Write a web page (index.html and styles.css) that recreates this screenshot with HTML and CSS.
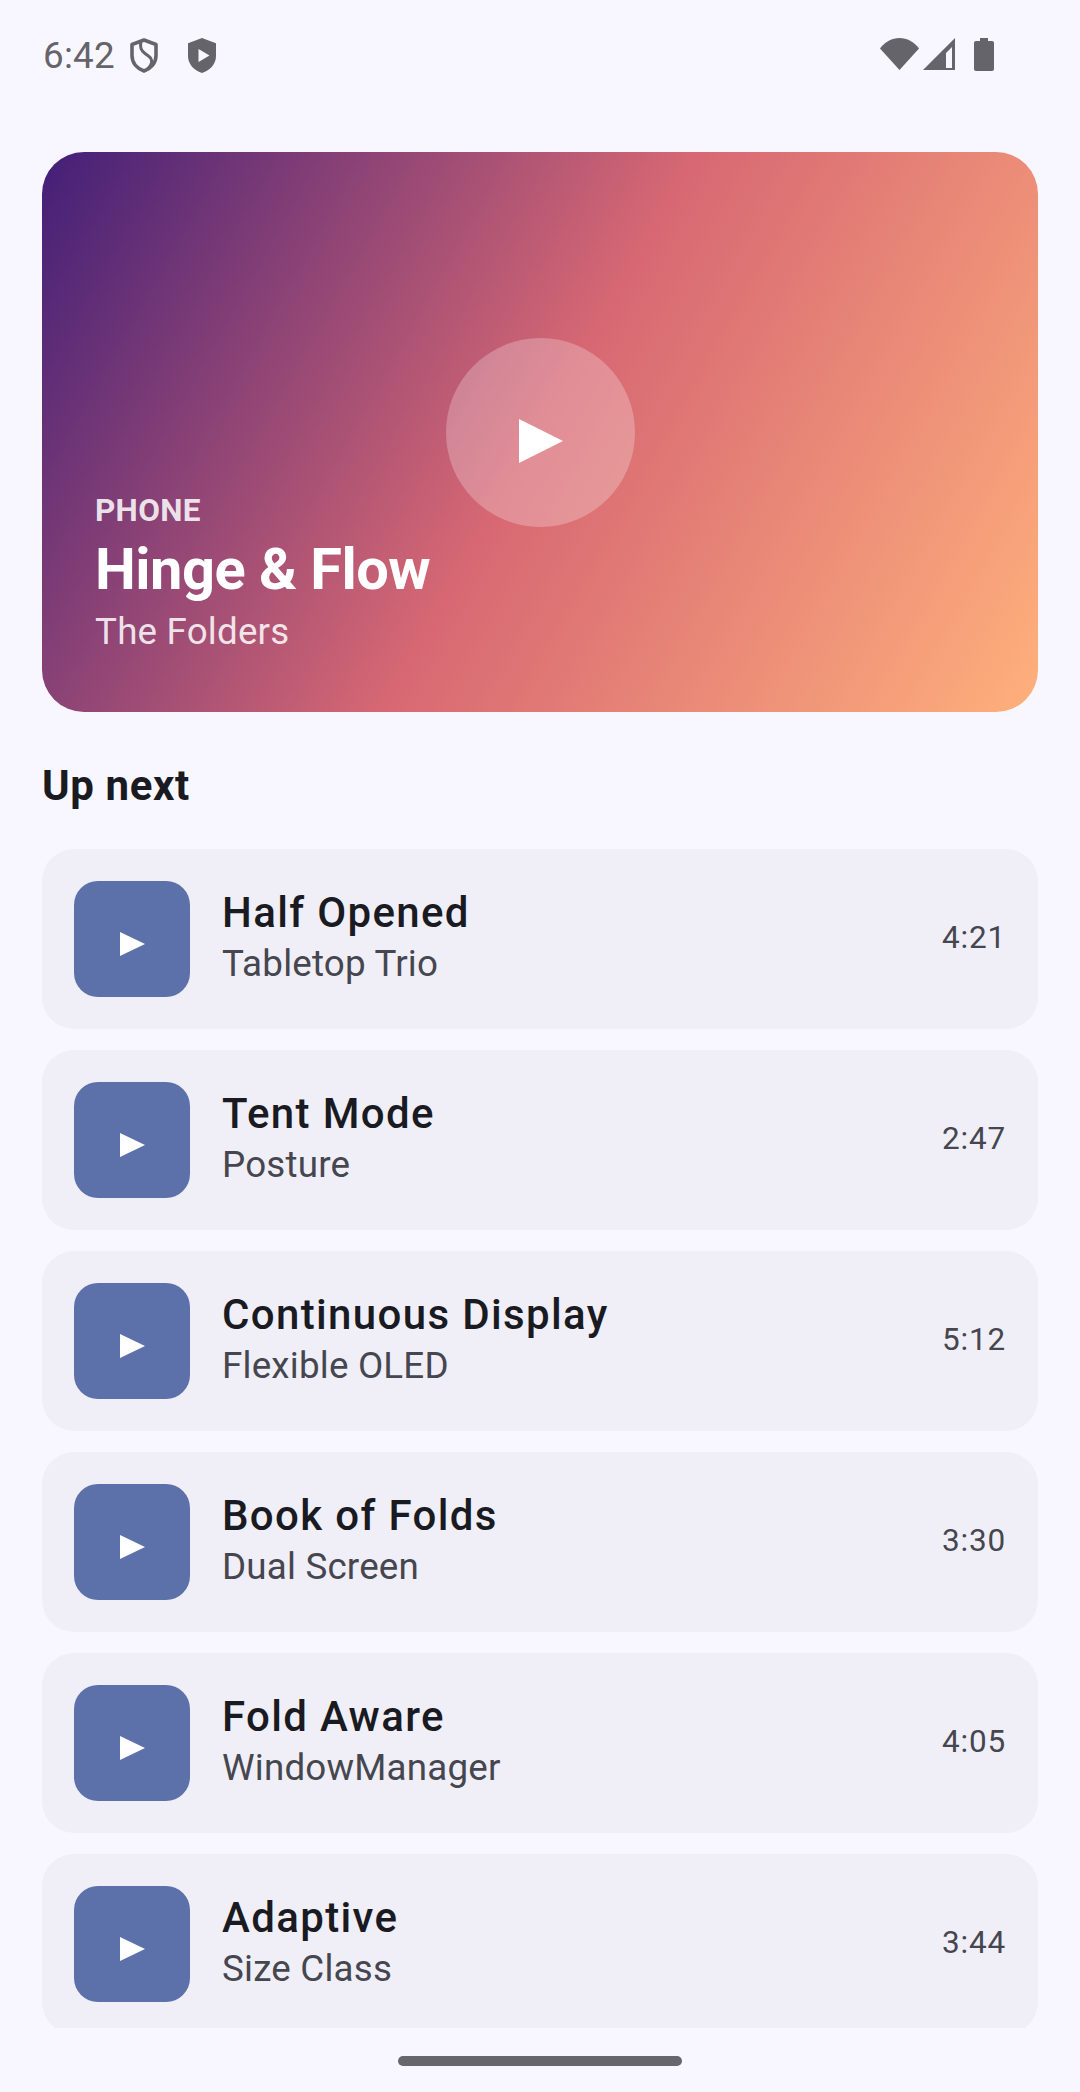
FILE: index.html
```html
<!DOCTYPE html>
<html lang="en">

<head>
    <meta charset="UTF-8">
    <meta name="viewport" content="width=device-width, initial-scale=1.0">
    <title>Up next</title>
    <link rel="stylesheet" href="styles.css">
</head>

<body>
    <div class="status-bar">
        <div class="status-left">
            <span class="clock">6:42</span>
            <svg class="shield" viewBox="0 0 28 35">
                <path d="M14 2 26 6.500V17.500C26 25 21 30.500 14 33 7 30.500 2 25 2 17.500V6.500Z" fill="none" stroke="#64646a" stroke-width="3.600" stroke-linejoin="round" />
                <path d="M11 4C9.500 9 11 12.500 15 15.500 19 18.500 22.500 20 21.500 25 21 27.500 19.500 29 17.500 31" fill="none" stroke="#64646a" stroke-width="3" />
            </svg>
            <svg class="shield shield-play" viewBox="0 0 28 35">
                <path fill-rule="evenodd" fill="#64646a" d="M14 0 28 5.200V18c0 8-5.600 14-14 17C5.600 32 0 26 0 18V5.200ZM10.500 11v13l11-6.500Z" />
            </svg>
        </div>
        <div class="status-right">
            <svg class="wifi" viewBox="0 0 39 32">
                <path fill="#64646a" d="M0 10.500C5 3.800 12 0 19.500 0S34 3.800 39 10.500L19.500 32Z" />
            </svg>
            <svg class="signal" viewBox="0 0 32 32">
                <path fill-rule="evenodd" fill="#64646a" d="M32 0V32H0ZM29 9 23 15V30H29Z" />
            </svg>
            <svg class="battery" viewBox="0 0 20 33">
                <path fill="#64646a" d="M6 0H14V3H18C19.200 3 20 3.800 20 5V31C20 32.200 19.200 33 18 33H2C.8 33 0 32.200 0 31V5C0 3.800.8 3 2 3H6Z" />
            </svg>
        </div>
    </div>

    <div class="content">
        <div class="hero">
            <div class="hero-play">
                <svg class="hero-arrow" viewBox="0 0 44 44">
                    <path fill="#fff" d="M0 0 44 22 0 44Z" />
                </svg>
            </div>
            <div class="hero-tag">PHONE</div>
            <div class="hero-title">Hinge &amp; Flow</div>
            <div class="hero-artist">The Folders</div>
        </div>

        <h2 class="section-title">Up next</h2>

        <div class="track-list">
            <div class="track">
                <div class="thumb"><svg class="thumb-arrow" viewBox="0 0 25 24"><path fill="#fff" d="M0 0 25 12 0 24Z" /></svg></div>
                <div class="track-info">
                    <div class="track-name">Half Opened</div>
                    <div class="track-artist">Tabletop Trio</div>
                </div>
                <div class="track-time">4:21</div>
            </div>
            <div class="track">
                <div class="thumb"><svg class="thumb-arrow" viewBox="0 0 25 24"><path fill="#fff" d="M0 0 25 12 0 24Z" /></svg></div>
                <div class="track-info">
                    <div class="track-name">Tent Mode</div>
                    <div class="track-artist">Posture</div>
                </div>
                <div class="track-time">2:47</div>
            </div>
            <div class="track">
                <div class="thumb"><svg class="thumb-arrow" viewBox="0 0 25 24"><path fill="#fff" d="M0 0 25 12 0 24Z" /></svg></div>
                <div class="track-info">
                    <div class="track-name">Continuous Display</div>
                    <div class="track-artist">Flexible OLED</div>
                </div>
                <div class="track-time">5:12</div>
            </div>
            <div class="track">
                <div class="thumb"><svg class="thumb-arrow" viewBox="0 0 25 24"><path fill="#fff" d="M0 0 25 12 0 24Z" /></svg></div>
                <div class="track-info">
                    <div class="track-name">Book of Folds</div>
                    <div class="track-artist">Dual Screen</div>
                </div>
                <div class="track-time">3:30</div>
            </div>
            <div class="track">
                <div class="thumb"><svg class="thumb-arrow" viewBox="0 0 25 24"><path fill="#fff" d="M0 0 25 12 0 24Z" /></svg></div>
                <div class="track-info">
                    <div class="track-name">Fold Aware</div>
                    <div class="track-artist">WindowManager</div>
                </div>
                <div class="track-time">4:05</div>
            </div>
            <div class="track">
                <div class="thumb"><svg class="thumb-arrow" viewBox="0 0 25 24"><path fill="#fff" d="M0 0 25 12 0 24Z" /></svg></div>
                <div class="track-info">
                    <div class="track-name">Adaptive</div>
                    <div class="track-artist">Size Class</div>
                </div>
                <div class="track-time">3:44</div>
            </div>
        </div>
    </div>

    <div class="nav-bar">
        <div class="home-pill"></div>
    </div>
</body>

</html>
```

FILE: styles.css
```css
body {
    margin: 0;
    padding: 0;
    width: 1080px;
    height: 2092px;
    overflow: hidden;
    background-color: #f8f7ff;
    font-family: Roboto, sans-serif;
    display: flex;
    flex-direction: column;
}

.status-bar {
    height: 152px;
    flex-shrink: 0;
    display: flex;
    justify-content: space-between;
    align-items: flex-start;
    padding: 38px 86px 0 43px;
    box-sizing: border-box;
}

.status-left {
    display: flex;
    align-items: center;
    height: 35px;
}

.clock {
    font-size: 36.75px;
    line-height: 35px;
    letter-spacing: 0.25px;
    color: #64646a;
    width: 87px;
}

.shield {
    width: 28px;
    height: 35px;
}

.shield-play {
    margin-left: 30px;
}

.status-right {
    display: flex;
    align-items: flex-start;
}

.wifi {
    width: 39px;
    height: 32px;
}

.signal {
    width: 32px;
    height: 32px;
    margin-left: 4px;
}

.battery {
    width: 20px;
    height: 33px;
    margin-left: 19px;
}

.content {
    height: 1876px;
    flex-shrink: 0;
    overflow: hidden;
    padding: 0 42px;
    box-sizing: border-box;
}

.hero {
    position: relative;
    height: 560px;
    border-radius: 42px;
    background: linear-gradient(119.4deg, #421f78 0%, #d76873 50%, #ffb07c 100%);
    box-sizing: border-box;
    padding: 339px 53px 0;
    color: #ffffff;
}

.hero-play {
    position: absolute;
    left: 404px;
    top: 186px;
    width: 189px;
    height: 189px;
    border-radius: 50%;
    background-color: rgba(255, 255, 255, 0.25);
    display: flex;
    align-items: center;
    justify-content: center;
}

.hero-arrow {
    width: 44px;
    height: 44px;
    margin-top: 16px;
}

.hero-tag {
    font-size: 31.5px;
    font-weight: 700;
    line-height: 40px;
    letter-spacing: 0.3px;
    color: rgba(255, 255, 255, 0.85);
}

.hero-title {
    font-size: 57.75px;
    font-weight: 700;
    line-height: 76px;
    letter-spacing: -0.5px;
}

.hero-artist {
    font-size: 36.75px;
    line-height: 50px;
    letter-spacing: 0.2px;
    color: rgba(255, 255, 255, 0.85);
}

.section-title {
    margin: 46px 0 0;
    font-size: 42px;
    font-weight: 700;
    line-height: 56px;
    letter-spacing: 0.6px;
    color: #1a1b22;
}

.track-list {
    margin-top: 35px;
    display: flex;
    flex-direction: column;
    gap: 21px;
}

.track {
    height: 180px;
    flex-shrink: 0;
    border-radius: 32px;
    background-color: #f0eff7;
    display: flex;
    align-items: center;
    padding: 0 32px;
    box-sizing: border-box;
}

.thumb {
    width: 116px;
    height: 116px;
    flex-shrink: 0;
    border-radius: 24px;
    background-color: #5c71aa;
    display: flex;
    align-items: center;
    justify-content: center;
}

.thumb-arrow {
    width: 25px;
    height: 24px;
    margin-top: 10px;
}

.track-info {
    flex: 1;
    margin-left: 32px;
    margin-bottom: 5px;
}

.track-name {
    font-size: 42px;
    font-weight: 500;
    line-height: 54px;
    letter-spacing: 1.35px;
    color: #1a1b22;
}

.track-artist {
    font-size: 36.75px;
    line-height: 48px;
    letter-spacing: 0.2px;
    color: #45464f;
}

.track-time {
    font-size: 31.5px;
    letter-spacing: 0.8px;
    color: #45464f;
    margin-bottom: 4px;
}

.nav-bar {
    flex: 1;
    display: flex;
    justify-content: center;
    padding-top: 28px;
    box-sizing: border-box;
}

.home-pill {
    width: 284px;
    height: 10px;
    border-radius: 5px;
    background-color: #66666c;
}
```
